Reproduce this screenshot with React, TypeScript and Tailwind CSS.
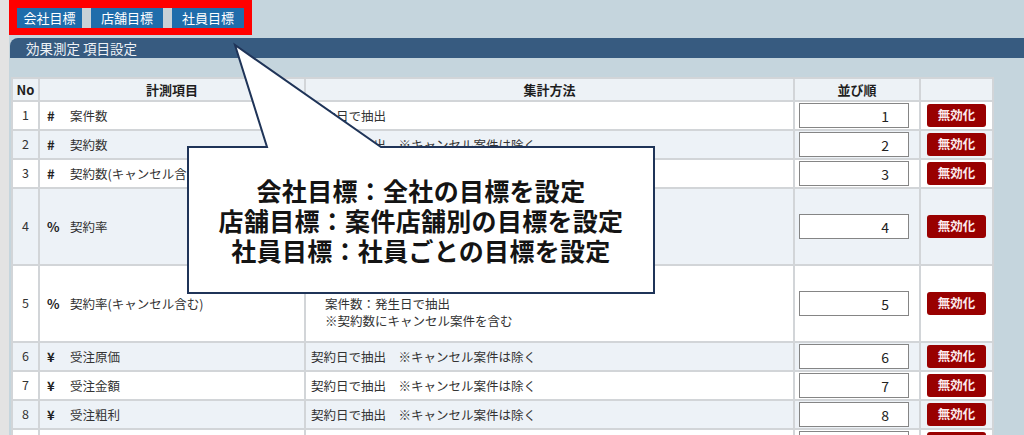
import React from "react";

type Row = {
  no: number;
  mark: string;
  name: string;
  method: string[];
  tall?: boolean;
};

const ROWS: Row[] = [
  { no: 1, mark: "#", name: "案件数", method: ["発生日で抽出"] },
  { no: 2, mark: "#", name: "契約数", method: ["契約日で抽出　※キャンセル案件は除く"] },
  { no: 3, mark: "#", name: "契約数(キャンセル含む)", method: ["契約日で抽出"] },
  {
    no: 4,
    mark: "%",
    name: "契約率",
    method: ["契約数：契約日で抽出", "案件数：発生日で抽出", "※キャンセル案件は除く"],
    tall: true,
  },
  {
    no: 5,
    mark: "%",
    name: "契約率(キャンセル含む)",
    method: ["契約数：契約日で抽出", "案件数：発生日で抽出", "※契約数にキャンセル案件を含む"],
    tall: true,
  },
  { no: 6, mark: "¥", name: "受注原価", method: ["契約日で抽出　※キャンセル案件は除く"] },
  { no: 7, mark: "¥", name: "受注金額", method: ["契約日で抽出　※キャンセル案件は除く"] },
  { no: 8, mark: "¥", name: "受注粗利", method: ["契約日で抽出　※キャンセル案件は除く"] },
  { no: 9, mark: "%", name: "粗利率", method: ["契約日で抽出　※キャンセル案件は除く"] },
];

const cell = "border-2 border-[#d2d5d8]";

function Callout() {
  return (
    <div className="pointer-events-none absolute inset-0">
      <svg width="1024" height="435" className="absolute left-0 top-0">
        <path
          d="M188 147 L267 147 L235 45 L381 147 L654 147 L654 293 L188 293 Z"
          fill="#ffffff"
          stroke="#1f3458"
          strokeWidth="2"
          strokeLinejoin="miter"
        />
      </svg>
      <div className="absolute left-[188px] top-[147px] flex h-[146px] w-[466px] flex-col items-center justify-center text-[25px] font-bold leading-[30px] tracking-[0.3px] text-[#141414]">
        <p>会社目標：全社の目標を設定</p>
        <p>店舗目標：案件店舗別の目標を設定</p>
        <p>社員目標：社員ごとの目標を設定</p>
      </div>
    </div>
  );
}

export default function App() {
  return (
    <div
      className="relative flex h-[435px] w-[1024px] overflow-hidden bg-[#c5d5dd] text-[#333]"
      style={{ fontFamily: '"Noto Sans CJK JP", "Noto Sans", sans-serif' }}
    >
      <div className="w-[9px] shrink-0 bg-[#e3e3e3]" />
      <div className="flex flex-1 flex-col">
        <div className="w-[243px] bg-[#ff0000] px-[8px] pb-[7px] pt-[8px]">
          <div className="flex h-[20px] gap-[9px] bg-[#c8d1d6] text-[13px] leading-[20px] text-white">
            <span className="w-[65px] bg-[#1f6dab] text-center">会社目標</span>
            <span className="w-[72px] bg-[#1f6dab] text-center">店舗目標</span>
            <span className="w-[72px] bg-[#1f6dab] text-center">社員目標</span>
          </div>
        </div>

        <div className="ml-[1px] mt-[3px] flex h-[26px] items-center rounded-tl-[8px] bg-[#375b80] pl-[16px] text-[13.5px] text-[#eef2f6]">
          効果測定 項目設定
        </div>

        <table className="ml-[2px] mt-[19px] w-[981px] table-fixed border-collapse bg-white text-[12.5px]">
          <colgroup>
            <col className="w-[27px]" />
            <col className="w-[266px]" />
            <col className="w-[489px]" />
            <col className="w-[126px]" />
            <col className="w-[73px]" />
          </colgroup>
          <thead>
            <tr className="h-[23px] bg-[#edf2f6] text-[13px] font-bold text-[#1e1e1e]">
              <th className={cell}>No</th>
              <th className={cell}>計測項目</th>
              <th className={cell}>集計方法</th>
              <th className={cell}>並び順</th>
              <th className={cell}></th>
            </tr>
          </thead>
          <tbody>
            {ROWS.map((r, i) => (
              <tr
                key={r.no}
                className={[r.tall ? "h-[77px]" : "h-[29px]", i % 2 === 1 ? "bg-[#edf2f7]" : "bg-white"].join(" ")}
              >
                <td className={`${cell} text-center`}>{r.no}</td>
                <td className={`${cell} pl-[7px]`}>
                  <span className="inline-block w-[23px] text-[13px] font-bold text-[#222]">{r.mark}</span>
                  {r.name}
                </td>
                <td className={`${cell} ${r.tall ? "pl-[19px]" : "pl-[5px]"} leading-[17px]`}>
                  {r.method.map((m) => (
                    <div key={m}>{m}</div>
                  ))}
                </td>
                <td className={`${cell} px-[4px]`}>
                  <input
                    readOnly
                    value={r.no}
                    className="block h-[25px] w-[110px] border border-[#858585] bg-white pr-[19px] text-right text-[14px] text-[#222] outline-none"
                  />
                </td>
                <td className={`${cell} px-[6px]`}>
                  <button
                    type="button"
                    className="block h-[23px] w-[59px] rounded-[3px] bg-[#990000] text-[12.5px] font-bold text-[#fbe9ec]"
                  >
                    無効化
                  </button>
                </td>
              </tr>
            ))}
          </tbody>
        </table>
      </div>
      <Callout />
    </div>
  );
}
